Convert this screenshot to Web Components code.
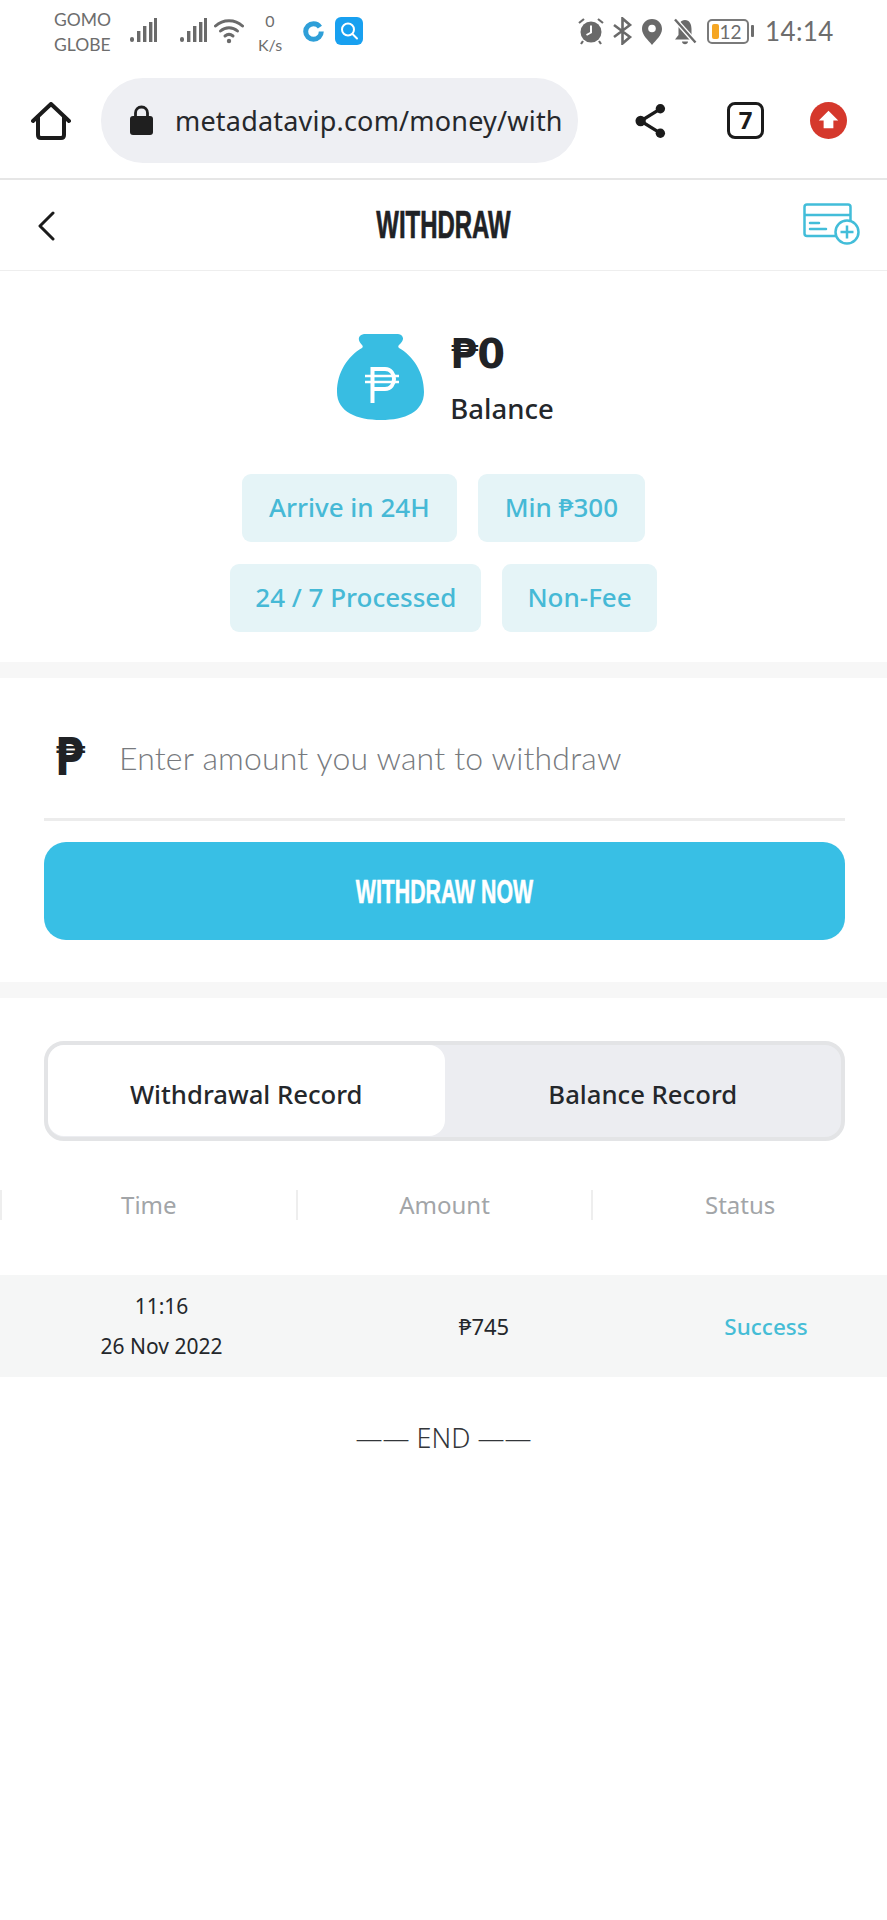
<!DOCTYPE html>
<html>
<head>
<meta charset="utf-8">
<title>Withdraw</title>
<style>
    html, body { margin: 0; padding: 0; background: #fff; }
    body { font-family: "Noto Sans", "DejaVu Sans", sans-serif; color: #24272b; width: 887px; }
</style>
</head>
<body>
<status-bar></status-bar>
<browser-bar url="metadatavip.com/money/with"></browser-bar>
<page-header>WITHDRAW</page-header>
<balance-card amount="₱0" label="Balance">
    <info-tag style="padding: 0 27px">Arrive in 24H</info-tag>
    <info-tag style="padding: 0 27px">Min ₱300</info-tag>
    <info-tag>24 / 7 Processed</info-tag>
    <info-tag>Non-Fee</info-tag>
</balance-card>
<withdraw-form></withdraw-form>
<record-tabs></record-tabs>
<record-table></record-table>

<script>
    class StatusBar extends HTMLElement {
        constructor() {
            super()
            this.attachShadow({ mode: 'open' })
            const signal = `<svg width="27" height="26" viewBox="0 0 27 26" fill="#6a6a6a"><rect x="0" y="20" width="4" height="5" rx="2"/><rect x="7" y="14" width="3.4" height="11"/><rect x="13" y="9" width="3.4" height="16"/><rect x="19" y="5" width="3.4" height="20" /><rect x="24" y="1" width="3" height="24"/></svg>`
            this.shadowRoot.innerHTML = `
            <style>
                :host { display: flex; height: 63px; align-items: center; color: #6d6d6d; font-family: "Lato", sans-serif; }
                .carrier { margin-left: 54px; width: 76px; font-size: 17.5px; line-height: 25px; }
                .signal-a { margin-top: 0; }
                .signal-b { margin-left: 23px; margin-top: 0; }
                .wifi { margin-left: 7px; margin-top: -1px; }
                .speed { width: 36px; margin-left: 8px; text-align: center; font-size: 16px; line-height: 24px; margin-top: 2px; }
                .apps { display: flex; align-items: center; margin-left: 15px; gap: 11px; margin-top: -1px; }
                .right { margin-left: auto; margin-right: 54px; display: flex; align-items: center; margin-top: -1px; }
                .time { font-size: 26px; margin-left: 11px; letter-spacing: .4px; width: 68px; }
                .batt { position: relative; width: 42px; height: 25px; box-sizing: border-box; border: 2px solid #7a7a7a; border-radius: 5px; margin-left: 10px; font-size: 19px; line-height: 22px; text-align: center; padding-left: 5px; }
                .batt i { position: absolute; left: 3px; top: 3px; width: 7px; height: 15px; background: #f5a623; border-radius: 2px; }
                .nub { width: 3px; height: 12px; background: #6d6d6d; margin-left: 2px; border-radius: 1px; }
            </style>
            <div class="carrier">GOMO<br>GLOBE</div>
            <span class="signal-a">${signal}</span>
            <span class="signal-b">${signal}</span>
            <svg class="wifi" width="30" height="28" viewBox="0 0 30 28" fill="none" stroke="#6a6a6a" stroke-width="3" stroke-linecap="round"><path d="M1.5 9C9 2 21 2 28.500 9"/><path d="M6.500 14C11.500 9.500 18.500 9.500 23.500 14"/><path d="M11 19C13.500 17 16.500 17 19 19"/><circle cx="15" cy="24" r="2.200" fill="#6a6a6a" stroke="none"/></svg>
            <div class="speed">0<br>K/s</div>
            <div class="apps">
                <svg width="21" height="21" viewBox="0 0 21 21" fill="none"><circle cx="10.500" cy="10.500" r="7.800" stroke="#2f9fd8" stroke-width="5" stroke-dasharray="44 5"/></svg>
                <svg width="28" height="28" viewBox="0 0 28 28"><rect width="28" height="28" rx="6" fill="#18a0f0"/><circle cx="13" cy="12.500" r="6" fill="none" stroke="#fff" stroke-width="2"/><path d="M17.500 17L22 21.500" stroke="#fff" stroke-width="2" stroke-linecap="round"/></svg>
            </div>
            <div class="right">
                <svg width="28" height="28" viewBox="0 0 28 28"><circle cx="14" cy="15" r="10.500" fill="#6a6a6a"/><path d="M14 8.500V15.500L9.500 18" fill="none" stroke="#fff" stroke-width="2"/><path d="M2 6L7 2M26 6L21 2M6 24L4 27M22 24L24 27" stroke="#6a6a6a" stroke-width="2.200"/></svg>
                <svg style="margin-left:7px" width="21" height="28" viewBox="0 0 21 28" fill="none" stroke="#6a6a6a" stroke-width="2.600"><path d="M2 8L18 20L10.500 26.500V1.500L18 8L2 20"/></svg>
                <svg style="margin-left:8px" width="22" height="27" viewBox="0 0 22 27"><path d="M11 1C5 1 1 5.500 1 11C1 17 7 22 11 27C15 22 21 17 21 11C21 5.500 17 1 11 1Z" fill="#6a6a6a"/><circle cx="11" cy="10.500" r="3.800" fill="#fff"/></svg>
                <svg style="margin-left:10px" width="24" height="27" viewBox="0 0 24 27"><path d="M12 2C7.500 2 5.500 6 5.500 11V17L2 21.500H22L18.500 17V11C18.500 6 16.500 2 12 2Z" fill="#6a6a6a"/><path d="M9 23.500H15C15 27 9 27 9 23.500Z" fill="#6a6a6a"/><path d="M1.500 1L22 24" stroke="#fff" stroke-width="5"/><path d="M2 1.500L22.500 24.500" stroke="#6a6a6a" stroke-width="2.400"/></svg>
                <div class="batt"><i></i>12</div>
                <div class="nub"></div>
                <div class="time">14:14</div>
            </div>
            `
        }
    }

    class BrowserBar extends HTMLElement {
        constructor() {
            super()
            this.attachShadow({ mode: 'open' })
            this.shadowRoot.innerHTML = `
            <style>
                :host { display: flex; align-items: center; height: 117px; box-sizing: border-box; border-bottom: 2px solid #e6e6e6; }
                .home { margin-left: 31px; }
                .pill { margin-left: 30px; width: 477px; height: 85px; box-sizing: border-box; border-radius: 42px; background: #eeeff3; display: flex; align-items: center; padding-left: 29px; margin-top: -1px; }
                .url { margin-left: 22px; white-space: nowrap; font-size: 27px; letter-spacing: .2px; color: #26282c; }
                .share { margin-left: 57px; }
                .tabs { margin-left: 61px; box-sizing: border-box; width: 37px; height: 37px; border: 3.500px solid #1b1b1b; border-radius: 8px; text-align: center; font: 700 24px/30px "Noto Sans", sans-serif; color: #1b1b1b; }
                .up { margin-left: 46px; }
            </style>
            <svg class="home" width="40" height="38" viewBox="0 0 40 38" fill="none" stroke="#1b1b1b" stroke-width="4" stroke-linejoin="round" stroke-linecap="round"><path d="M2 19L20 2L38 19"/><path d="M7 15V33C7 35 8 36 10 36H30C32 36 33 35 33 33V15"/></svg>
            <div class="pill">
                <svg width="23" height="30" viewBox="0 0 23 30"><path d="M5.500 13V8C5.500 4.500 8 2 11.500 2C15 2 17.500 4.500 17.500 8V13" fill="none" stroke="#1f1f1f" stroke-width="2.800"/><rect y="11" width="23" height="19" rx="3" fill="#1f1f1f"/></svg>
                <div class="url">${this.getAttribute('url')}</div>
            </div>
            <svg class="share" width="31" height="38" viewBox="0 0 33 38" fill="#1b1b1b" stroke="#1b1b1b"><path d="M27 6L6 19L27 32" fill="none" stroke-width="3.500"/><circle cx="27" cy="6" r="5" stroke="none"/><circle cx="6" cy="19" r="5.500" stroke="none"/><circle cx="27" cy="32" r="5" stroke="none"/></svg>
            <div class="tabs">7</div>
            <svg class="up" width="37" height="37" viewBox="0 0 38 38"><circle cx="19" cy="19" r="19" fill="#d5382c"/><path d="M19 9L29 19H24V27H14V19H9Z" fill="#fff"/></svg>
            `
        }
    }

    class PageHeader extends HTMLElement {
        constructor() {
            super()
            this.attachShadow({ mode: 'open' })
            this.shadowRoot.innerHTML = `
            <style>
                :host { display: grid; grid-template-columns: 90px 1fr 90px; align-items: center; height: 91px; box-sizing: border-box; border-bottom: 1px solid #eeeeee; }
                .title { text-align: center; font: 700 38px/1 "Liberation Sans Narrow", "Liberation Sans", sans-serif; transform: scaleX(.63); -webkit-text-stroke: .7px #202225; color: #202225; }
                .back { margin-left: 37px; margin-top: 2px; }
                .card { justify-self: end; margin-right: 27px; margin-top: -2px; }
            </style>
            <svg class="back" width="18" height="30" viewBox="0 0 18 30" fill="none" stroke="#1b1b1b" stroke-width="3" stroke-linecap="round" stroke-linejoin="round"><path d="M16 2L3 15L16 28"/></svg>
            <div class="title"><slot></slot></div>
            <svg class="card" width="57" height="42" viewBox="0 0 57 42" fill="none" stroke="#42bdd9" stroke-width="2.500"><path d="M33 33H4C2.500 33 1.500 32 1.500 30.500V4C1.500 2.500 2.500 1.500 4 1.500H45C46.500 1.500 47.500 2.500 47.500 4V20"/><path d="M1.500 12H47.500"/><path d="M7 20H16M7 26H23" stroke-linecap="round"/><circle cx="44" cy="29" r="11.500" fill="#fff"/><path d="M44 22.500V35.500M37.500 29H50.500"/></svg>
            `
        }
    }

    class InfoTag extends HTMLElement {
        constructor() {
            super()
            this.attachShadow({ mode: 'open' })
            this.shadowRoot.innerHTML = `
            <style>
                :host { display: block; box-sizing: border-box; height: 68px; padding: 0 25px; border-radius: 9px; background: #e5f4f7; color: #46b9d6; font-size: 26px; font-weight: 500; line-height: 66px; white-space: nowrap; }
            </style>
            <slot></slot>
            `
        }
    }

    class BalanceCard extends HTMLElement {
        constructor() {
            super()
            this.attachShadow({ mode: 'open' })
            this.shadowRoot.innerHTML = `
            <style>
                :host { display: block; height: 407px; box-sizing: border-box; padding-top: 63px; border-bottom: 16px solid #f7f7f7; }
                .top { display: flex; justify-content: center; align-items: flex-start; gap: 26px; height: 87px; margin-left: 4px; }
                .amount { font: 700 40px/46px "DejaVu Sans", sans-serif; letter-spacing: -1px; color: #202225; margin-top: -3px; }
                .label { font-size: 27.5px; font-weight: 500; line-height: 36px; margin-top: 14px; color: #24272b; }
                .tags { display: flex; flex-wrap: wrap; justify-content: center; gap: 22px 21px; width: 470px; margin: 53px auto 0; }
            </style>
            <div class="top">
                <svg width="87" height="87" viewBox="0 0 87 87"><path d="M27 0C35 -.5 55 -.5 61 0C67 1 68 6 62 11C61 12 61 13 62 14C76 22 87 38 87 58C87 78 68 86 44 86C20 86 0 78 0 58C0 38 11 22 25 14C26 13 26 12 25 11C20 6 21 1 27 0Z" fill="#38bde2"/><path d="M35.500 69V35H48C60 35 60 55 48 55H35.500" fill="none" stroke="#fff" stroke-width="4"/><path d="M28 42H62M28 48H62" stroke="#fff" stroke-width="2.500"/></svg>
                <div>
                    <div class="amount">${this.getAttribute('amount')}</div>
                    <div class="label">${this.getAttribute('label')}</div>
                </div>
            </div>
            <div class="tags"><slot></slot></div>
            `
        }
    }

    class WithdrawForm extends HTMLElement {
        constructor() {
            super()
            this.attachShadow({ mode: 'open' })
            this.shadowRoot.innerHTML = `
            <style>
                :host { display: block; height: 320px; box-sizing: border-box; padding: 0 42px 0 44px; border-bottom: 16px solid #f7f7f7; }
                .row { display: flex; align-items: center; height: 140px; border-bottom: 3px solid #ececec; box-sizing: content-box; }
                .peso { width: 75px; box-sizing: border-box; margin-top: 18px; }
                .peso span { display: block; width: 44px; margin-left: 11px; font: 700 52px/1 "DejaVu Sans", sans-serif; color: #202225; transform: scaleX(.83); transform-origin: 0 0; }
                .hint { font: 300 32px/1 "Lato", sans-serif; color: #777a7e; letter-spacing: .18px; margin-top: 20px; }
                .btn { height: 98px; margin-top: 21px; border-radius: 22px; background: #38bfe5; color: #fff; display: flex; align-items: center; justify-content: center; font: 700 33px/1 "Liberation Sans Narrow", "Liberation Sans", sans-serif; }
                .btn span { display: block; transform: scaleX(.645); -webkit-text-stroke: .6px #fff; white-space: nowrap; }
            </style>
            <div class="row">
                <div class="peso"><span>₱</span></div>
                <div class="hint">Enter amount you want to withdraw</div>
            </div>
            <div class="btn"><span>WITHDRAW NOW</span></div>
            `
        }
    }

    class RecordTabs extends HTMLElement {
        constructor() {
            super()
            this.attachShadow({ mode: 'open' })
            this.shadowRoot.innerHTML = `
            <style>
                :host { display: grid; grid-template-columns: 1fr 1fr; box-sizing: border-box; width: 801px; height: 100px; margin: 43px 42px 0 44px; border: 4px solid #e3e4e6; border-radius: 20px; background: #ecedf1; }
                div { display: flex; align-items: center; justify-content: center; font-size: 25.7px; font-weight: 500; color: #24272b; padding-top: 7px; box-sizing: border-box; }
                .on { background: #fff; border-radius: 16px; margin-bottom: 1px; }
            </style>
            <div class="on">Withdrawal Record</div>
            <div>Balance Record</div>
            `
        }
    }

    class RecordTable extends HTMLElement {
        constructor() {
            super()
            this.attachShadow({ mode: 'open' })
            this.shadowRoot.innerHTML = `
            <style>
                :host { display: block; font-size: 24px; }
                .head { display: grid; grid-template-columns: repeat(3, 1fr); margin-top: 49px; height: 85px; color: #a2a5a8; }
                .head div { height: 30px; line-height: 30px; text-align: center; border-left: 2px solid #eeeeee; }
                .row { display: grid; grid-template-columns: 323px 322px 242px; align-items: center; height: 102px; background: #f5f6f6; font-size: 21px; text-align: center; }
                .when { line-height: 40px; }
                .amt { font-size: 22px; }
                .ok { color: #45bdd6; font-size: 22.5px; font-weight: 500; }
                .end { margin-top: 43px; text-align: center; font-size: 27px; font-weight: 300; line-height: 36px; color: #33363a; }
            </style>
            <div class="head"><div>Time</div><div>Amount</div><div>Status</div></div>
            <div class="row">
                <div class="when">11:16<br>26 Nov 2022</div>
                <div class="amt">₱745</div>
                <div class="ok">Success</div>
            </div>
            <div class="end">—— END ——</div>
            `
        }
    }

    window.customElements.define('status-bar', StatusBar)
    window.customElements.define('browser-bar', BrowserBar)
    window.customElements.define('page-header', PageHeader)
    window.customElements.define('info-tag', InfoTag)
    window.customElements.define('balance-card', BalanceCard)
    window.customElements.define('withdraw-form', WithdrawForm)
    window.customElements.define('record-tabs', RecordTabs)
    window.customElements.define('record-table', RecordTable)
</script>
</body>
</html>
